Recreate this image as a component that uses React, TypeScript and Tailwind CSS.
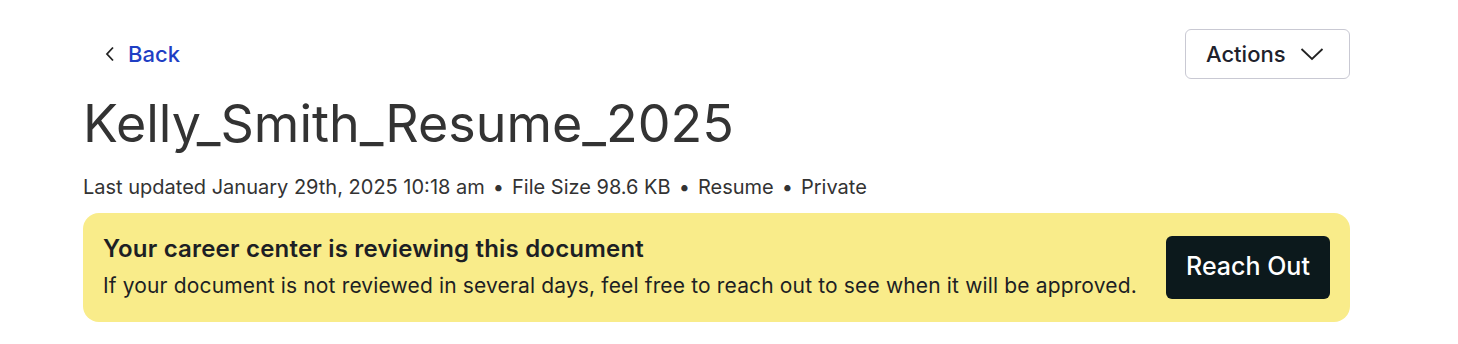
import React from 'react';

const App: React.FC = () => {
  return (
    <div
      className="min-h-screen bg-white pl-[83px] pr-[108px] pt-[29px] text-[#333333]"
      style={{ fontFamily: 'Inter, "Noto Sans", sans-serif' }}
    >
      {/* Top row */}
      <div className="flex items-center justify-between">
        <button className="ml-[22px] flex items-center gap-[13px] text-[22px] font-medium text-[#1f3fc4]">
          <svg width="10" height="16" viewBox="0 0 10 16" fill="none" stroke="#222" strokeWidth="1.8">
            <path d="M8 1.5 L2 8 L8 14.5" />
          </svg>
          Back
        </button>
        <button className="flex h-[50px] w-[165px] items-center justify-between rounded-md border border-[#c9c9d3] pl-[20px] pr-[25px] text-[22px] font-medium text-[#20212b]">
          Actions
          <svg width="24" height="14" viewBox="0 0 24 14" fill="none" stroke="#222" strokeWidth="1.8">
            <path d="M1.5 2 L12 12 L22.5 2" />
          </svg>
        </button>
      </div>

      {/* Title */}
      <h1 className="mt-[15px] text-[52px] leading-[60px] text-[#333333]">
        Kelly_Smith_Resume_2025
      </h1>

      {/* Meta */}
      <div className="mt-[19px] flex items-center gap-[8px] text-[20px] leading-[28px] text-[#333333]">
        <span>Last updated January 29th, 2025 10:18 am</span>
        <span>•</span>
        <span>File Size 98.6 KB</span>
        <span>•</span>
        <span>Resume</span>
        <span>•</span>
        <span>Private</span>
      </div>

      {/* Banner */}
      <div className="mt-[12px] flex items-center justify-between rounded-[16px] bg-[#f9ec8a] pb-[22px] pl-[20px] pr-[20px] pt-[21px]">
        <div className="flex flex-col gap-[8px]">
          <div className="text-[24px] font-semibold leading-[30px] tracking-[0.2px] text-[#1d1f24]">
            Your career center is reviewing this document
          </div>
          <div className="text-[21px] leading-[28px] tracking-[0.15px] text-[#1d1f24]">
            If your document is not reviewed in several days, feel free to reach out to see when it will be approved.
          </div>
        </div>
        <button className="h-[63px] w-[164px] rounded-md bg-[#0c191c] text-[25px] font-medium text-white">
          Reach Out
        </button>
      </div>
    </div>
  );
};

export default App;
